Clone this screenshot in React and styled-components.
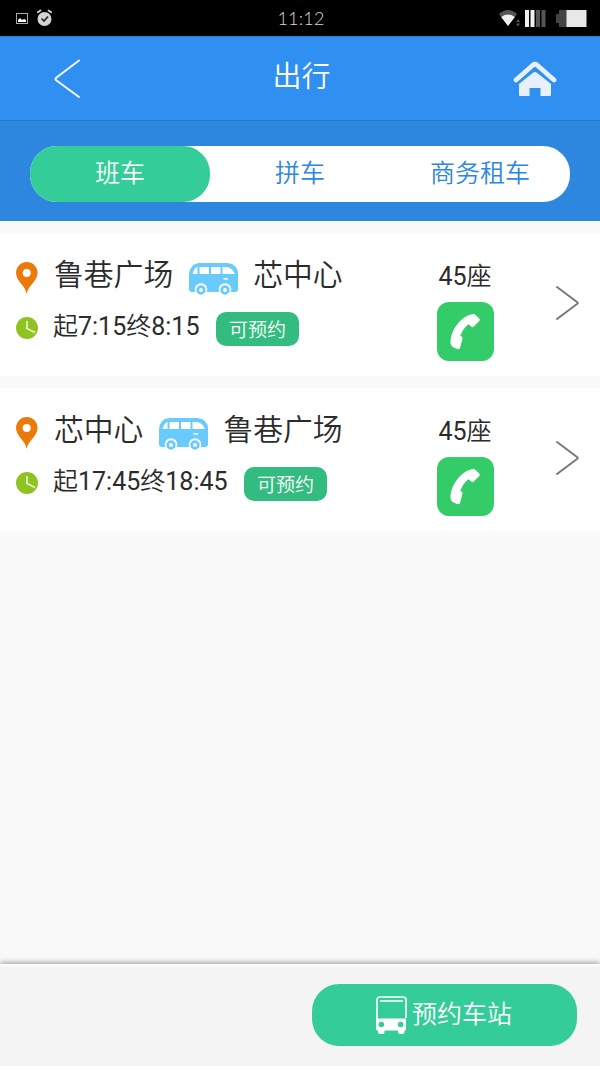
import React from 'react'
import styled, { createGlobalStyle } from 'styled-components'

const GlobalStyle = createGlobalStyle`
  * {
    box-sizing: border-box;
  }

  body {
    margin: 0;
    background: #f9f9f9;
    font-family: Roboto, "Noto Sans CJK SC", sans-serif;
    font-weight: 350;
    color: #2b2b2b;
  }

  button {
    border: 0;
    padding: 0;
    background: none;
    font: inherit;
    color: inherit;
  }

  svg {
    display: block;
    flex: none;
  }
`

const Page = styled.div`
  display: flex;
  flex-direction: column;
  width: 600px;
  height: 1066px;
  overflow: hidden;
`

const StatusBar = styled.div`
  display: grid;
  grid-template-columns: 1fr 60px 1fr;
  align-items: center;
  flex: none;
  height: 36px;
  padding: 0 13px 0 15px;
  background: #000;
`

const StatusIcons = styled.div`
  display: flex;
  align-items: center;
  justify-content: ${props => props.$end ? 'flex-end' : 'flex-start'};
  gap: ${props => props.$gap}px;
`

const Clock = styled.div`
  font-family: Lato, sans-serif;
  font-size: 18px;
  font-weight: 300;
  line-height: 36px;
  letter-spacing: 0.2px;
  text-align: center;
  white-space: nowrap;
  color: #d8d8d8;
`

const Header = styled.header`
  display: flex;
  align-items: center;
  justify-content: space-between;
  flex: none;
  height: 85px;
  padding: 0 43px 0 53px;
  border-top: 1px solid #2a7ad0;
  border-bottom: 1px solid #2a78c8;
  background: #3090f2;
`

const Title = styled.h1`
  margin: 0;
  padding: 0 0 3px 9px;
  font-size: 29px;
  font-weight: 350;
  line-height: 40px;
  color: #fff;
`

const TabBar = styled.div`
  flex: none;
  height: 100px;
  padding: 25px 30px 0;
  background: #2e87df;
`

const Tabs = styled.div`
  display: flex;
  height: 56px;
  border-radius: 27px;
  background: #fff;
`

const Tab = styled.button`
  flex: 1;
  height: 56px;
  border-radius: 27px;
  font-size: 25px;
  line-height: 50px;
  background: ${props => props.$active ? '#34cc98' : 'transparent'};
  color: ${props => props.$active ? '#fff' : '#2e87df'};
`

const List = styled.main`
  display: flex;
  flex-direction: column;
  flex: 1;
  gap: 12px;
  padding-top: 12px;
`

const Card = styled.section`
  display: flex;
  height: 143px;
  padding: 0 20px 0 15px;
  background: #fff;
`

const Info = styled.div`
  display: flex;
  flex-direction: column;
  gap: 14px;
  width: 400px;
  padding-top: 25px;
`

const Row = styled.div`
  display: flex;
  align-items: center;
  height: ${props => props.$height}px;
`

const Marker = styled.div`
  width: ${props => props.$width}px;
`

const Stop = styled.span`
  padding-bottom: 7px;
  font-size: 29.8px;
  line-height: 40px;
`

const BusSlot = styled.div`
  padding: 2px 15px 0 16px;
`

const Time = styled.span`
  padding-bottom: 5px;
  font-size: 25px;
  line-height: 34px;
`

const Digits = styled.span`
  font-weight: 400;
`

const Badge = styled.span`
  width: 83px;
  height: 34px;
  margin-left: 16.5px;
  border-radius: 10px;
  background: #32bc80;
  font-size: 19px;
  line-height: 38px;
  text-align: center;
  color: #fff;
`

const Contact = styled.div`
  display: flex;
  flex-direction: column;
  align-items: center;
  width: 100px;
  padding-top: 25px;
`

const Seats = styled.div`
  height: 44px;
  font-size: 25px;
  line-height: 38px;
`

const CallButton = styled.button`
  display: grid;
  place-items: center;
  width: 57px;
  height: 59px;
  border-radius: 12px;
  background: #34cc68;
`

const More = styled.div`
  display: flex;
  align-items: center;
  margin-left: auto;
  padding-bottom: 4px;
`

const Footer = styled.footer`
  display: flex;
  justify-content: flex-end;
  flex: none;
  height: 102px;
  padding: 18px 23px 0 0;
  border-top: 2px solid #fdfdfd;
  background: #f4f4f4;
  box-shadow: 0 -1px 6px rgba(0, 0, 0, 0.4);
`

const BookButton = styled.button`
  display: flex;
  align-items: center;
  justify-content: center;
  gap: 5px;
  width: 265px;
  height: 62px;
  padding-right: 1px;
  border-radius: 27px;
  background: #34cc98;
  color: #fff;
`

const BookLabel = styled.span`
  font-size: 25px;
  line-height: 40px;
`

const PictureIcon = () => (
  <svg width="14" height="13" viewBox="0 0 14 13">
    <rect x="1.5" y="1.5" width="11" height="10" fill="none" stroke="#aaa" />
    <path d="M3 10V8l2-2 2 2 2-1 2 1v2z" fill="#fff" />
  </svg>
)

const AlarmIcon = () => (
  <svg width="17" height="18" viewBox="0 0 17 18">
    <circle cx="8.5" cy="10" r="7" fill="#d4d4d4" />
    <path d="M1.8 3.3L4.5 1.5M15.2 3.3L12.5 1.5" stroke="#d4d4d4" strokeWidth="1.8" strokeLinecap="round" />
    <path d="M5.5 9.5l2.5 2.5 4-4.5" fill="none" stroke="#222" strokeWidth="1.6" />
  </svg>
)

const WifiIcon = () => (
  <svg width="22" height="18" viewBox="0 0 22 18">
    <path d="M0 5Q9 -3 18 5L9 17z" fill="#555" />
    <path d="M2.2 8Q9 3.2 15.8 8L9 17z" fill="#f0f0f0" />
    <path d="M17 13l2-3 2 3zM17 14.500l2 3 2-3z" fill="#555" />
  </svg>
)

const SignalIcon = () => (
  <svg width="21" height="18" viewBox="0 0 21 18">
    <path d="M0 1h4v17H0zM5.5 1h4v17h-4z" fill="#f0f0f0" />
    <path d="M11 1h4v17h-4zM16.5 1h4v17h-4z" fill="#555" />
  </svg>
)

const BatteryIcon = () => (
  <svg width="37" height="18" viewBox="-6 0 37 18">
    <path d="M0 5h3V1h8v17H3v-4H0z" fill="#444" />
    <path d="M10.500 1h20v17h-20z" fill="#e8e8e8" />
  </svg>
)

const BackIcon = () => (
  <svg width="28" height="40" viewBox="0 0 28 40">
    <path d="M26 1.5L3.5 18.500Q1.5 20 3.500 21.500L26 38" fill="none" stroke="#f4faff" strokeWidth="2" strokeLinecap="round" />
  </svg>
)

const HomeIcon = () => (
  <svg width="44" height="36" viewBox="0 0 44 36">
    <path d="M3 19L20 4Q22 2.500 24 4L41 19" fill="none" stroke="#e6f1fd" strokeWidth="4.800" strokeLinecap="round" strokeLinejoin="round" />
    <path d="M6 23L20 11.800Q22 10.300 24 11.800L38 23V34Q38 35 37 35H27.500V27H16.500V35H7Q6 35 6 34z" fill="#e6f1fd" />
  </svg>
)

const PinIcon = () => (
  <svg width="23" height="33" viewBox="0 0 23 33">
    <path d="M11.700 32C10.500 23.500 1 19.500 1 10.800a10.800 10.800 0 0 1 21.600 0C22.600 19.500 12.900 23.500 11.700 32z" fill="#ec7a0a" />
    <circle cx="11.700" cy="11" r="4" fill="#fff" />
  </svg>
)

const TimeIcon = () => (
  <svg width="24" height="24" viewBox="0 0 24 24">
    <circle cx="12" cy="11" r="11" fill="#90c322" />
    <path d="M12 4v7.500l8 4" fill="none" stroke="#e4f2c4" strokeWidth="1.800" />
  </svg>
)

const BusIcon = () => (
  <svg width="49" height="32" viewBox="0 0 49 32">
    <path d="M10 0H38Q49 1 49 11V26Q49 29 46 29H3Q0 29 0 26V11Q1 1 10 0z" fill="#68cbfc" />
    <path d="M3.500 11Q5 5 8.500 4V11zM10.500 4h9.500v7h-9.500zM22 4h9.500v7H22zM33.500 4H38Q43.500 5 46 11H33.500z" fill="#fff" />
    <rect x="34.500" y="15" width="4.500" height="1.600" fill="#fff" />
    <circle cx="12" cy="26.500" r="6.300" fill="#fff" />
    <circle cx="36" cy="26.500" r="6.300" fill="#fff" />
    <circle cx="12" cy="27" r="3.300" fill="none" stroke="#68cbfc" strokeWidth="2.800" />
    <circle cx="36" cy="27" r="3.300" fill="none" stroke="#68cbfc" strokeWidth="2.800" />
  </svg>
)

const PhoneIcon = () => (
  <svg width="32" height="37" viewBox="0 0 32 37">
    <path d="M23.500 1Q25 .4 26 1.400L30.300 5.600Q31.300 6.800 30.300 7.900L24.500 13.700Q23.300 14.600 22.300 13.600L19.500 11.200Q14.500 14.500 11.200 23L12.600 23.400Q13.800 24 13.500 25.500L11 35Q10.500 36.500 8.500 36Q1.800 34.500 1.500 30C1.500 18 10.500 4 23.500 1z" fill="#fff" />
  </svg>
)

const ArrowIcon = () => (
  <svg width="25" height="36" viewBox="0 0 25 36">
    <path d="M2 2L22 17Q23.500 18 22 19L2 34" fill="none" stroke="#777" strokeWidth="2" strokeLinecap="round" />
  </svg>
)

const StationIcon = () => (
  <svg width="31" height="38" viewBox="0 0 31 38">
    <path d="M1 24V4Q1 1 4 1H27Q30 1 30 4V22" fill="none" stroke="#fff" strokeWidth="1.700" />
    <path d="M4 5H27" stroke="#fff" strokeWidth="1.600" />
    <path d="M0 22.500H30V33Q30 34.500 28.500 34.500V36Q28.500 38 26.500 38H24Q22 38 22 36V34.500H8.500V36Q8.500 38 6.500 38H4Q2 38 2 36V34.500Q0 34.500 0 33z" fill="#fff" />
    <circle cx="5.300" cy="28.500" r="2.800" fill="#34cc98" />
    <circle cx="24.700" cy="28.500" r="2.800" fill="#34cc98" />
  </svg>
)

const tabs = ['班车', '拼车', '商务租车']

const lines = [
  { from: '鲁巷广场', to: '芯中心', start: '7:15', end: '8:15', seats: 45 },
  { from: '芯中心', to: '鲁巷广场', start: '17:45', end: '18:45', seats: 45 }
]

const Line = ({ from, to, start, end, seats }) => (
  <Card>
    <Info>
      <Row $height={40}>
        <Marker $width={39}><PinIcon /></Marker>
        <Stop>{from}</Stop>
        <BusSlot><BusIcon /></BusSlot>
        <Stop>{to}</Stop>
      </Row>
      <Row $height={34}>
        <Marker $width={38}><TimeIcon /></Marker>
        <Time>起<Digits>{start}</Digits>终<Digits>{end}</Digits></Time>
        <Badge>可预约</Badge>
      </Row>
    </Info>
    <Contact>
      <Seats><Digits>{seats}</Digits>座</Seats>
      <CallButton aria-label="电话"><PhoneIcon /></CallButton>
    </Contact>
    <More><ArrowIcon /></More>
  </Card>
)

class App extends React.Component {
  state = { active: 0 }

  render () {
    return (
      <Page>
        <GlobalStyle />
        <StatusBar>
          <StatusIcons $gap={7}>
            <PictureIcon />
            <AlarmIcon />
          </StatusIcons>
          <Clock>11:12</Clock>
          <StatusIcons $end $gap={4}>
            <WifiIcon />
            <SignalIcon />
            <BatteryIcon />
          </StatusIcons>
        </StatusBar>
        <Header>
          <BackIcon />
          <Title>出行</Title>
          <HomeIcon />
        </Header>
        <TabBar>
          <Tabs>
            {tabs.map((tab, i) => (
              <Tab key={tab} $active={i === this.state.active} onClick={() => this.setState({ active: i })}>{tab}</Tab>
            ))}
          </Tabs>
        </TabBar>
        <List>
          {lines.map(line => <Line key={line.start} {...line} />)}
        </List>
        <Footer>
          <BookButton>
            <StationIcon />
            <BookLabel>预约车站</BookLabel>
          </BookButton>
        </Footer>
      </Page>
    )
  }
}

export default App
